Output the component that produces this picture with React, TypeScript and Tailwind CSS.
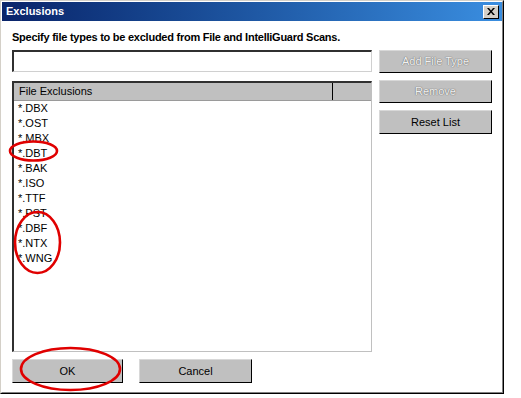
const files = [
  "*.DBX",
  "*.OST",
  "*.MBX",
  "*.DBT",
  "*.BAK",
  "*.ISO",
  "*.TTF",
  "*.PST",
  "*.DBF",
  "*.NTX",
  "*.WNG",
];

const Btn = ({
  label,
  disabled,
  className = "",
}: {
  label: string;
  disabled?: boolean;
  className?: string;
}) => (
  <button
    className={
      "flex items-center justify-center border-t border-l border-r border-b border-t-[#d8d8d8] border-l-[#d8d8d8] border-r-black border-b-black bg-[#c0c0c0] text-[11px] " +
      (disabled
        ? "text-[#f2f2f2] [text-shadow:0_0_1px_#6a6a6a,0_0_1px_#6a6a6a] "
        : "text-black ") +
      className
    }
  >
    {label}
  </button>
);

export default function App() {
  return (
    <div className="relative h-[398px] w-[521px] bg-white font-['Liberation_Sans',Arial,sans-serif]">
      <div className="h-[394px] w-[504px] border border-t-[#d4d0c8] border-l-[#d4d0c8] border-r-black border-b-black">
        <div className="flex h-full w-full flex-col border border-t-white border-l-white border-r-[#808080] border-b-[#808080] bg-white">
          {/* title bar */}
          <div className="flex h-[19px] items-center justify-between bg-gradient-to-r from-[#0a246a] to-[#3a8ee0] pr-[3px] pl-[4px]">
            <span className="text-[11px] font-bold text-white">Exclusions</span>
            <button className="flex h-[14px] w-[16px] items-center justify-center border border-t-white border-l-white border-r-black border-b-black bg-[#d4d0c8]">
              <svg width="8" height="7" viewBox="0 0 8 7">
                <path d="M0 0h2l2 2.5L6 0h2L5 3.5 8 7H6L4 4.5 2 7H0l3-3.5z" fill="black" />
              </svg>
            </button>
          </div>

          {/* body */}
          <div className="flex flex-1 flex-col pt-[9px] pl-[10px]">
            <p className="text-[11px] leading-[14px] font-bold tracking-[-0.25px] text-black">
              Specify file types to be excluded from File and IntelliGuard Scans.
            </p>

            <div className="mt-[6px] flex gap-[7px]">
              <div className="flex w-[360px] flex-col gap-[9px]">
                <div className="h-[22px] border-t-2 border-l-2 border-r border-b border-t-[#303030] border-l-[#303030] border-r-[#d0d0d0] border-b-[#d0d0d0] bg-white" />
                <div className="flex h-[271px] flex-col border-t-2 border-l-2 border-r border-b border-t-[#303030] border-l-[#303030] border-r-[#c0c0c0] border-b-[#c0c0c0] bg-white">
                  <div className="flex h-[18px] border-b border-b-[#9a9a9a] bg-[#c0c0c0] text-[11px] text-black">
                    <div className="flex w-[319px] items-center border-r border-r-black pl-[5px]">
                      File Exclusions
                    </div>
                    <div className="flex-1" />
                  </div>
                  {files.map((f) => (
                    <div key={f} className="flex h-[15px] items-center pl-[4px] text-[11px] text-black">
                      {f}
                    </div>
                  ))}
                </div>
              </div>

              <div className="flex w-[113px] flex-col gap-[7px]">
                <Btn label="Add File Type" disabled className="h-[23px]" />
                <Btn label="Remove" disabled className="h-[23px]" />
                <Btn label="Reset List" className="h-[24px]" />
              </div>
            </div>

            <div className="mt-[7px] flex gap-[16px]">
              <Btn label="OK" className="h-[24px] w-[111px]" />
              <Btn label="Cancel" className="h-[24px] w-[113px]" />
            </div>
          </div>
        </div>
      </div>

      {/* red annotation marks */}
      <svg className="pointer-events-none absolute top-0 left-0" width="521" height="398">
        <g fill="none" stroke="#e00000" strokeWidth="2.6">
          <ellipse cx="33.5" cy="151" rx="23.5" ry="9.5" />
          <ellipse cx="37.5" cy="242.5" rx="22.5" ry="30.5" />
          <ellipse cx="70.5" cy="369" rx="49.5" ry="21" />
        </g>
      </svg>
    </div>
  );
}
